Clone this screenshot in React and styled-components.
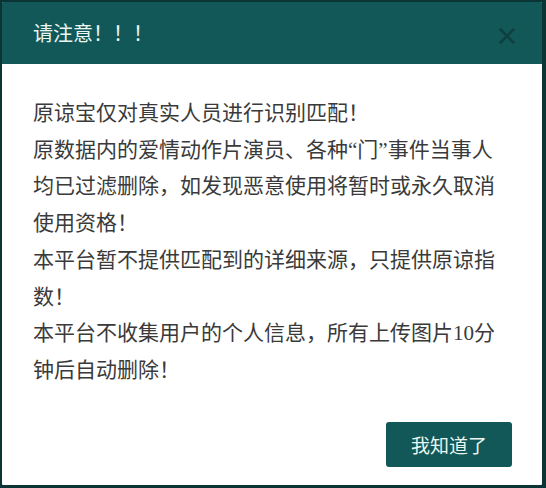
import React from 'react';
import styled, { createGlobalStyle } from 'styled-components';

const GlobalStyle = createGlobalStyle`
  html, body {
    margin: 0;
    padding: 0;
    background: #0b3535;
  }
  body {
    width: 546px;
    height: 488px;
    overflow: hidden;
  }
`;

const notices = [
  '原谅宝仅对真实人员进行识别匹配！',
  '原数据内的爱情动作片演员、各种“门”事件当事人均已过滤删除，如发现恶意使用将暂时或永久取消使用资格！',
  '本平台暂不提供匹配到的详细来源，只提供原谅指数！',
  '本平台不收集用户的个人信息，所有上传图片10分钟后自动删除！',
];

const CloseIcon = () => (
  <svg width="16" height="16" viewBox="0 0 16 16">
    <path d="M1.5 1.5 L14.5 14.5 M14.5 1.5 L1.5 14.5" stroke="#0f3f40" strokeWidth="2.6" strokeLinecap="round" />
  </svg>
);

const App = () => {
  return (
    <>
      <GlobalStyle />
      <Page>
        <Dialog>
          <Header>
            <Title>请注意！！！</Title>
            <CloseButton aria-label="关闭">
              <CloseIcon />
            </CloseButton>
          </Header>
          <Content>
            {notices.map((t) => (
              <Notice key={t}>{t}</Notice>
            ))}
          </Content>
          <Footer>
            <ConfirmButton>我知道了</ConfirmButton>
          </Footer>
        </Dialog>
      </Page>
    </>
  );
};

export default App;

const Page = styled.div`
  padding: 2px;
  width: 546px;
  height: 488px;
  box-sizing: border-box;`

const Dialog = styled.div`
  width: 540px;
  height: 483px;
  background: #ffffff;
  display: flex;
  flex-direction: column;
  border-radius: 1px;
  overflow: hidden;`

const Header = styled.div`
  height: 62px;
  background: #135858;
  display: flex;
  align-items: center;
  justify-content: space-between;
  padding: 0 27px 0 31px;
  flex-shrink: 0;`

const Title = styled.h1`
  margin: 0 0 1px;
  font-family: "Noto Sans CJK SC", sans-serif;
  font-weight: 400;
  font-size: 20px;
  color: #eaf6f2;
  letter-spacing: 0;`

const CloseButton = styled.button`
  border: none;
  background: transparent;
  padding: 0;
  display: flex;
  margin-top: 6px;
  cursor: pointer;`

const Content = styled.div`
  flex: 1;
  padding: 31px 46px 0 31px;`

const Notice = styled.p`
  margin: 0;
  width: 463px;
  font-family: "Liberation Serif", "Noto Sans CJK SC", serif;
  font-size: 21px;
  line-height: 36.7px;
  color: #3a3a3a;`

const Footer = styled.div`
  display: flex;
  justify-content: flex-end;
  padding: 0 30px 18px 0;`

const ConfirmButton = styled.button`
  width: 126px;
  height: 45px;
  border: none;
  border-radius: 3px;
  background: #135858;
  color: #eaf6f2;
  font-family: "Noto Sans CJK SC", sans-serif;
  font-size: 19px;
  cursor: pointer;`
